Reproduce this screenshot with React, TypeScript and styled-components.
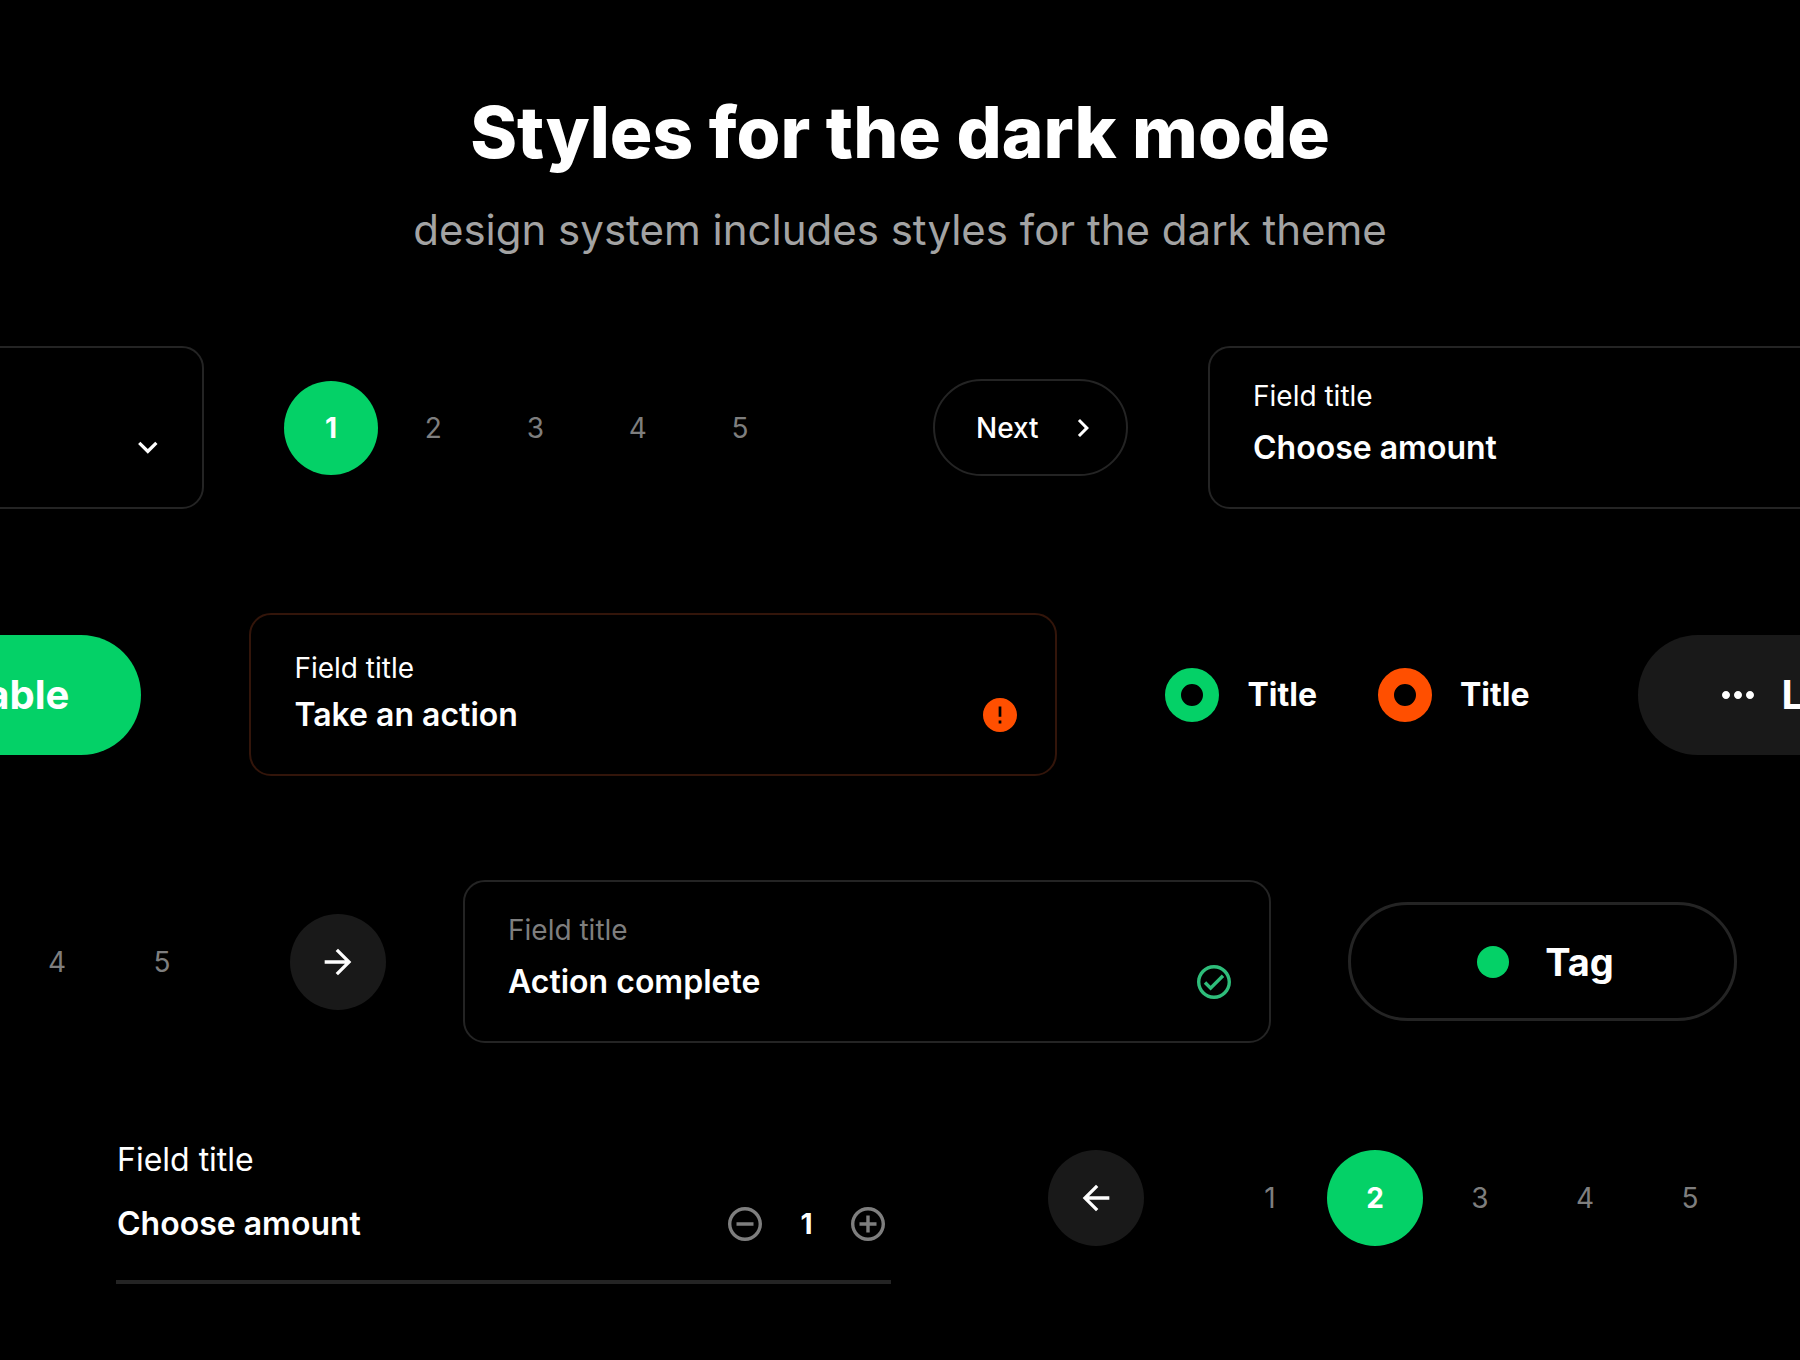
import React, { useState } from "react";
import styled, { createGlobalStyle } from "styled-components";

const color = {
  page: "#000000",
  surface: "#191919",
  line: "#242424",
  dangerLine: "#33150a",
  text: "#ffffff",
  muted: "#7e7e7e",
  subtitle: "#a3a3a3",
  accent: "#04d167",
  success: "#2ebd7a",
  danger: "#ff4f00",
};

const GlobalStyle = createGlobalStyle`
  *, *::before, *::after { box-sizing: border-box; }
  body {
    margin: 0;
    background: ${color.page};
    color: ${color.text};
    font-family: Inter, "Liberation Sans", sans-serif;
  }
  button, input, select {
    margin: 0;
    padding: 0;
    border: 0;
    background: none;
    color: inherit;
    font: inherit;
  }
  button { cursor: pointer; }
`;

const Page = styled.main`
  min-height: 100vh;
  padding: 88px 0 72px;
  overflow: hidden;
`;

const Header = styled.header`
  padding: 0 40px;
  text-align: center;
`;

const Heading = styled.h1`
  margin: 0;
  font-size: 71px;
  line-height: 88px;
  font-weight: 800;
`;

const Subtitle = styled.p`
  margin: 28px 0 0;
  font-size: 42px;
  line-height: 52px;
  color: ${color.subtitle};
`;

const Rows = styled.div`
  display: flex;
  flex-direction: column;
  gap: 104px;
  margin-top: 90px;
`;

const Row = styled.section<{ $gap: number }>`
  display: flex;
  align-items: center;
  gap: ${(p) => p.$gap}px;
`;

const FooterRow = styled(Row)`
  align-items: flex-start;
  margin-top: -5px;
  padding: 0 62px 0 116px;
`;

const Bleed = styled.div<{ $grow: number; $side: "left" | "right" }>`
  display: flex;
  flex: ${(p) => p.$grow} 1 0;
  min-width: 0;
  justify-content: ${(p) => (p.$side === "left" ? "flex-end" : "flex-start")};
`;

const RowEnd = styled.div`
  display: flex;
  flex: none;
  padding-right: 63px;
`;

const FieldCard = styled.div<{ $invalid?: boolean; $tight?: boolean }>`
  display: flex;
  flex: none;
  flex-direction: column;
  justify-content: flex-end;
  gap: ${(p) => (p.$tight ? 13 : 18)}px;
  width: 808px;
  min-height: 163px;
  padding: 24px 38px 41px 43px;
  border: 2px solid ${(p) => (p.$invalid ? color.dangerLine : color.line)};
  border-radius: 22px;
`;

const FieldLabel = styled.label<{ $muted?: boolean }>`
  font-size: 28px;
  line-height: 32px;
  color: ${(p) => (p.$muted ? color.muted : color.text)};
`;

const FieldLine = styled.div`
  display: flex;
  align-items: center;
  gap: 24px;
`;

const FieldInput = styled.input`
  flex: 1;
  min-width: 0;
  height: 36px;
  font-size: 32px;
  line-height: 36px;
  font-weight: 600;
  outline: none;
`;

const FieldSelect = styled.select`
  flex: 1;
  min-width: 0;
  height: 36px;
  appearance: none;
  font-size: 32px;
  line-height: 36px;
  font-weight: 600;
`;

const Icon = styled.svg<{ $size: number }>`
  display: block;
  flex: none;
  width: ${(p) => p.$size}px;
  height: ${(p) => p.$size}px;
  fill: currentColor;
`;

const Pages = styled.nav<{ $gap: number }>`
  display: flex;
  flex: none;
  align-items: center;
  gap: ${(p) => p.$gap}px;
`;

const FooterPages = styled(Pages)`
  padding-top: 8px;
`;

const PageList = styled.div<{ $width: number }>`
  display: flex;
  flex: none;
  justify-content: space-between;
  width: ${(p) => p.$width}px;
`;

const PageButton = styled.button<{ $size: number }>`
  flex: none;
  width: ${(p) => p.$size}px;
  height: ${(p) => p.$size}px;
  border-radius: 50%;
  font-size: 28px;
  line-height: 36px;
  color: ${color.muted};

  &[aria-current="page"] {
    background: ${color.accent};
    color: ${color.text};
    font-weight: 700;
  }
`;

const ArrowButton = styled.button`
  display: grid;
  flex: none;
  place-items: center;
  width: 96px;
  height: 96px;
  border-radius: 50%;
  background: ${color.surface};
`;

const NextButton = styled.button`
  display: flex;
  flex: none;
  align-items: center;
  justify-content: space-between;
  width: 195px;
  height: 97px;
  padding: 0 25px 0 41px;
  border: 2px solid ${color.line};
  border-radius: 49px;
  font-size: 28px;
  line-height: 36px;
  font-weight: 500;
`;

const PillButton = styled.button<{ $accent?: boolean }>`
  display: flex;
  flex: none;
  align-items: center;
  justify-content: center;
  gap: 20px;
  height: 120px;
  padding: 0 ${(p) => (p.$accent ? 72 : 76)}px;
  border-radius: 60px;
  background: ${(p) => (p.$accent ? color.accent : color.surface)};
  font-size: 40px;
  line-height: 48px;
  font-weight: 700;
  white-space: nowrap;
`;

const TagButton = styled.button`
  display: flex;
  align-items: center;
  justify-content: center;
  gap: 36px;
  width: 389px;
  height: 119px;
  padding-left: 6px;
  border: 3px solid ${color.line};
  border-radius: 60px;
  font-size: 38px;
  line-height: 48px;
  font-weight: 700;
`;

const TagDot = styled.span`
  width: 32px;
  height: 32px;
  border-radius: 50%;
  background: ${color.accent};
`;

const RadioGroup = styled.div`
  display: flex;
  flex: none;
  gap: 61px;
`;

const RadioLabel = styled.label`
  display: flex;
  align-items: center;
  gap: 28px;
  font-size: 32px;
  line-height: 40px;
  font-weight: 700;
`;

const Radio = styled.input<{ $color: string }>`
  width: 54px;
  height: 54px;
  border: 16px solid ${(p) => p.$color};
  border-radius: 50%;
  appearance: none;
`;

const Amount = styled.div`
  display: flex;
  flex: 1;
  flex-direction: column;
  gap: 28px;
  padding-bottom: 38px;
  border-bottom: 4px solid ${color.line};
`;

const AmountLabel = styled.label`
  padding-left: 1px;
  font-size: 32px;
  line-height: 36px;
`;

const AmountLine = styled.div`
  display: flex;
  align-items: center;
  padding: 0 6px 0 1px;
`;

const Stepper = styled.div`
  display: flex;
  flex: none;
  align-items: center;
`;

const StepButton = styled.button`
  color: ${color.muted};
`;

const StepCount = styled.output`
  width: 89px;
  font-size: 28px;
  line-height: 36px;
  font-weight: 700;
  text-align: center;
`;

const numbers = [1, 2, 3, 4, 5];

const ArrowRight = () => (
  <Icon $size={40} viewBox="0 0 24 24" aria-hidden="true">
    <path d="M12 4l-1.41 1.41L16.17 11H4v2h12.17l-5.58 5.59L12 20l8-8z" />
  </Icon>
);

const ArrowLeft = () => (
  <Icon $size={40} viewBox="0 0 24 24" aria-hidden="true">
    <path d="M12 4l1.41 1.41L7.83 11H20v2H7.83l5.58 5.59L12 20l-8-8z" />
  </Icon>
);

function Pager({ size, width, start }: { size: number; width: number; start: number }) {
  const [page, setPage] = useState(start);
  return (
    <PageList $width={width}>
      {numbers.map((n) => (
        <PageButton
          key={n}
          type="button"
          $size={size}
          aria-current={n === page ? "page" : undefined}
          onClick={() => setPage(n)}
        >
          {n}
        </PageButton>
      ))}
    </PageList>
  );
}

function TextField({
  id,
  value,
  muted,
  tight,
  invalid,
  icon,
}: {
  id: string;
  value: string;
  muted?: boolean;
  tight?: boolean;
  invalid?: boolean;
  icon?: React.ReactNode;
}) {
  return (
    <FieldCard $invalid={invalid} $tight={tight}>
      <FieldLabel htmlFor={id} $muted={muted}>
        Field title
      </FieldLabel>
      <FieldLine>
        <FieldInput id={id} type="text" defaultValue={value} aria-invalid={invalid} />
        {icon}
      </FieldLine>
    </FieldCard>
  );
}

function AmountField() {
  const [count, setCount] = useState(1);
  return (
    <Amount>
      <AmountLabel htmlFor="amount">Field title</AmountLabel>
      <AmountLine>
        <FieldInput id="amount" type="text" defaultValue="Choose amount" />
        <Stepper>
          <StepButton type="button" aria-label="Decrease" onClick={() => setCount(count - 1)}>
            <Icon $size={34} viewBox="2 2 20 20">
              <path d="M7 11v2h10v-2H7zm5-9C6.48 2 2 6.48 2 12s4.48 10 10 10 10-4.48 10-10S17.52 2 12 2zm0 18c-4.41 0-8-3.59-8-8s3.59-8 8-8 8 3.59 8 8-3.59 8-8 8z" />
            </Icon>
          </StepButton>
          <StepCount>{count}</StepCount>
          <StepButton type="button" aria-label="Increase" onClick={() => setCount(count + 1)}>
            <Icon $size={34} viewBox="2 2 20 20">
              <path d="M13 7h-2v4H7v2h4v4h2v-4h4v-2h-4V7zm-1-5C6.48 2 2 6.48 2 12s4.48 10 10 10 10-4.48 10-10S17.52 2 12 2zm0 18c-4.41 0-8-3.59-8-8s3.59-8 8-8 8 3.59 8 8-3.59 8-8 8z" />
            </Icon>
          </StepButton>
        </Stepper>
      </AmountLine>
    </Amount>
  );
}

export default function App() {
  return (
    <>
      <GlobalStyle />
      <Page>
        <Header>
          <Heading>Styles for the dark mode</Heading>
          <Subtitle>design system includes styles for the dark theme</Subtitle>
        </Header>

        <Rows>
          <Row $gap={80}>
            <Bleed $grow={204} $side="left">
              <FieldCard>
                <FieldLine>
                  <FieldSelect aria-label="Option" defaultValue="">
                    <option value="" />
                  </FieldSelect>
                  <Icon $size={34} viewBox="1 2 21 21" aria-hidden="true">
                    <path d="M7.41 8.59L12 13.17l4.59-4.58L18 10l-6 6-6-6 1.41-1.41z" />
                  </Icon>
                </FieldLine>
              </FieldCard>
            </Bleed>
            <Pages $gap={146} aria-label="Pages">
              <Pager size={94} width={503} start={1} />
              <NextButton type="button">
                Next
                <Icon $size={36} viewBox="0 0 24 24" aria-hidden="true">
                  <path d="M10 6L8.59 7.41 13.17 12l-4.58 4.59L10 18l6-6z" />
                </Icon>
              </NextButton>
            </Pages>
            <Bleed $grow={592} $side="right">
              <TextField id="choose" value="Choose amount" />
            </Bleed>
          </Row>

          <Row $gap={108}>
            <Bleed $grow={141} $side="left">
              <PillButton type="button" $accent>
                Enable
              </PillButton>
            </Bleed>
            <TextField
              id="action"
              value="Take an action"
              tight
              invalid
              icon={
                <Icon $size={34} viewBox="2 2 20 20" color={color.danger} aria-hidden="true">
                  <path d="M12 2C6.48 2 2 6.48 2 12s4.48 10 10 10 10-4.48 10-10S17.52 2 12 2zm.8 15h-1.6v-1.7h1.6V17zm0-4h-1.6V7h1.6v6z" />
                </Icon>
              }
            />
            <RadioGroup role="radiogroup" aria-label="Title">
              <RadioLabel>
                <Radio type="radio" name="first" defaultChecked $color={color.accent} />
                Title
              </RadioLabel>
              <RadioLabel>
                <Radio type="radio" name="second" defaultChecked $color={color.danger} />
                Title
              </RadioLabel>
            </RadioGroup>
            <Bleed $grow={162} $side="right">
              <PillButton type="button">
                <Icon $size={48} viewBox="0 0 24 24" aria-hidden="true">
                  <path d="M6 10c-1.1 0-2 .9-2 2s.9 2 2 2 2-.9 2-2-.9-2-2-2zm12 0c-1.1 0-2 .9-2 2s.9 2 2 2 2-.9 2-2-.9-2-2-2zm-6 0c-1.1 0-2 .9-2 2s.9 2 2 2 2-.9 2-2-.9-2-2-2z" />
                </Icon>
                Loading
              </PillButton>
            </Bleed>
          </Row>

          <Row $gap={77}>
            <Bleed $grow={385} $side="left">
              <Pages $gap={80} aria-label="Pages">
                <Pager size={96} width={516} start={1} />
                <ArrowButton type="button" aria-label="Next page">
                  <ArrowRight />
                </ArrowButton>
              </Pages>
            </Bleed>
            <TextField
              id="complete"
              value="Action complete"
              muted
              icon={
                <Icon $size={34} viewBox="2 2 20 20" color={color.success} aria-hidden="true">
                  <path d="M12 2C6.48 2 2 6.48 2 12s4.48 10 10 10 10-4.48 10-10S17.52 2 12 2zm0 18c-4.41 0-8-3.59-8-8s3.59-8 8-8 8 3.59 8 8-3.59 8-8 8zm4.59-12.42L10 14.17l-2.59-2.58L6 13l4 4 8-8z" />
                </Icon>
              }
            />
            <RowEnd>
              <TagButton type="button">
                <TagDot />
                Tag
              </TagButton>
            </RowEnd>
          </Row>

          <FooterRow $gap={157}>
            <AmountField />
            <FooterPages $gap={78} aria-label="Pages">
              <ArrowButton type="button" aria-label="Previous page">
                <ArrowLeft />
              </ArrowButton>
              <Pager size={96} width={516} start={2} />
            </FooterPages>
          </FooterRow>
        </Rows>
      </Page>
    </>
  );
}
